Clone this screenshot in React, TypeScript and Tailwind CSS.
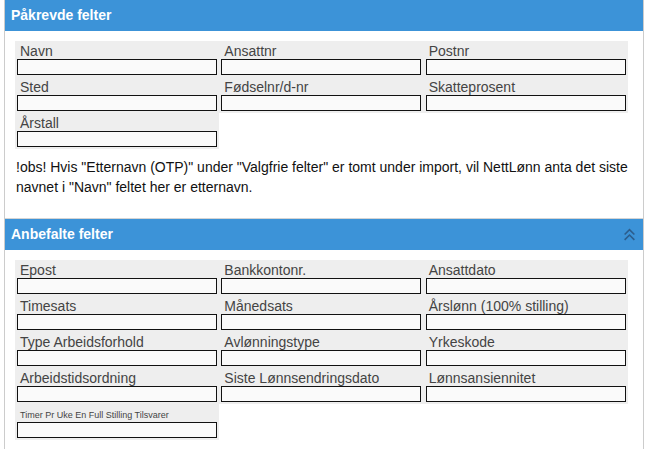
const font = { fontFamily: '"Liberation Sans", Arial, sans-serif' };

type Field = { label: string; small?: boolean };

const required: Field[] = [
  { label: "Navn" },
  { label: "Ansattnr" },
  { label: "Postnr" },
  { label: "Sted" },
  { label: "Fødselnr/d-nr" },
  { label: "Skatteprosent" },
  { label: "Årstall" },
];

const recommended: Field[] = [
  { label: "Epost" },
  { label: "Bankkontonr." },
  { label: "Ansattdato" },
  { label: "Timesats" },
  { label: "Månedsats" },
  { label: "Årslønn (100% stilling)" },
  { label: "Type Arbeidsforhold" },
  { label: "Avlønningstype" },
  { label: "Yrkeskode" },
  { label: "Arbeidstidsordning" },
  { label: "Siste Lønnsendringsdato" },
  { label: "Lønnsansiennitet" },
  { label: "Timer Pr Uke En Full Stilling Tilsvarer", small: true },
];

function FieldCell({ field }: { field: Field }) {
  return (
    <div className="flex h-[36px] flex-col bg-[#eeeeee] px-[2px]">
      {field.small ? (
        <label className="block h-[18px] px-[3px] pt-[5px] text-[9px] leading-[12px] text-[#444]">
          {field.label}
        </label>
      ) : (
        <label className="block h-[18px] px-[3px] pt-[2px] text-[14px] leading-[17px] text-[#444]">
          {field.label}
        </label>
      )}
      <input
        type="text"
        className="h-[16px] w-[200px] border border-[#111] bg-[#fafafa] outline-none"
      />
    </div>
  );
}

function SectionHeader({ title, collapse }: { title: string; collapse?: boolean }) {
  return (
    <div className="flex h-[31px] items-center justify-between bg-[#3c93d8] pl-[6px] pr-[7px]">
      <span className="text-[14px] font-bold text-white">{title}</span>
      {collapse && (
        <svg width="13" height="13" viewBox="0 0 12 12" fill="none" stroke="#2c5d8c" strokeWidth="1.5">
          <polyline points="1.5,6 6,1.5 10.5,6" />
          <polyline points="1.5,11 6,6.5 10.5,11" />
        </svg>
      )}
    </div>
  );
}

export default function App() {
  return (
    <div className="min-h-[449px] bg-white" style={font}>
      <div className="ml-[4px] w-[640px] min-h-[449px] border-x border-[#cccccc]">
        <SectionHeader title="Påkrevde felter" />
        <div className="border-b border-[#d4d4d4] px-[10px] pt-[10px] pb-[21px]">
          <div className="grid w-[613px] grid-cols-3">
            {required.map((f) => (
              <FieldCell key={f.label} field={f} />
            ))}
          </div>
          <p className="mt-[8px] pl-[1px] pr-[2px] text-[14px] leading-[20px] text-[#111]">
            !obs! Hvis "Etternavn (OTP)" under "Valgfrie felter" er tomt under import, vil NettLønn anta det siste
            navnet i "Navn" feltet her er etternavn.
          </p>
        </div>
        <SectionHeader title="Anbefalte felter" collapse />
        <div className="px-[10px] pt-[10px]">
          <div className="grid w-[613px] grid-cols-3">
            {recommended.map((f) => (
              <FieldCell key={f.label} field={f} />
            ))}
          </div>
        </div>
      </div>
    </div>
  );
}
